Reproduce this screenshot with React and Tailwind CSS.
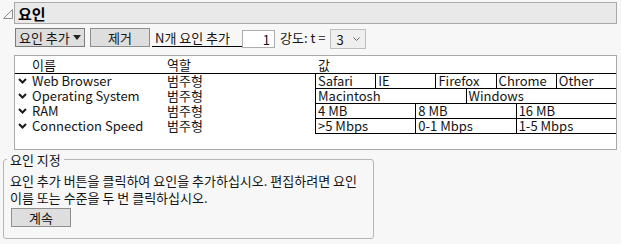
export default function App() {
  const rows = [
    { name: 'Web Browser', role: '범주형', values: ['Safari', 'IE', 'Firefox', 'Chrome', 'Other'] },
    { name: 'Operating System', role: '범주형', values: ['Macintosh', 'Windows'] },
    { name: 'RAM', role: '범주형', values: ['4 MB', '8 MB', '16 MB'] },
    { name: 'Connection Speed', role: '범주형', values: ['>5 Mbps', '0-1 Mbps', '1-5 Mbps'] },
  ];
  return (
    <div className="w-[621px] h-[244px] bg-[#f7f7f7] text-[13px] text-[#141414] font-['Noto_Sans_CJK_KR','Noto_Sans',sans-serif] overflow-hidden">
      {/* Title bar */}
      <div className="flex items-start pt-[2px] pl-[3px] pr-[4px]">
        <svg width="11" height="22" viewBox="0 0 11 22" className="shrink-0">
          <path d="M0.5 16.5 L9.5 16.5 L9.5 7.5 Z" fill="none" stroke="#8c8c8c" strokeWidth="1" />
        </svg>
        <div className="flex-1 h-[22px] bg-[#e9e9e9] border border-[#a9a9a9] pl-[3px] flex items-center text-[15px] font-bold leading-none text-black">
          요인
        </div>
      </div>

      {/* Controls row */}
      <div className="flex items-start ml-[15px] mt-[4px] leading-none">
        <div className="w-[70px] h-[19px] bg-[#dedede] border border-[#7c7c7c] flex items-center pl-[3px] gap-[3px]">
          <span>요인 추가</span>
          <svg width="8" height="5" viewBox="0 0 8 5"><path d="M0 0 L8 0 L4 5 Z" fill="#222" /></svg>
        </div>
        <div className="ml-[5px] w-[60px] h-[19px] bg-[#dedede] border border-[#8f8f8f] flex items-center justify-center">
          제거
        </div>
        <div className="ml-[2px] w-[90px] h-[19px] border-b border-black flex items-center pl-[3px]">
          N개 요인 추가
        </div>
        <div className="mt-[2px] w-[33px] h-[18px] bg-white border border-[#adadad] flex items-center justify-end pr-[4px]">
          1
        </div>
        <div className="ml-[5px] h-[19px] flex items-center">강도: t =</div>
        <div className="ml-[5px] mt-[1px] w-[36px] h-[20px] bg-[#efefef] border border-[#bdbdbd] flex items-center pl-[5px] pr-[5px] justify-between">
          <span>3</span>
          <svg width="7" height="5" viewBox="0 0 7 5"><path d="M0.5 0.5 L3.5 3.5 L6.5 0.5" fill="none" stroke="#666" strokeWidth="1" /></svg>
        </div>
      </div>

      {/* Factor table */}
      <div className="mt-[6px] ml-[14px] w-[603px] h-[95px] bg-white border border-[#a9a9a9]">
        <div className="h-[18px] border-b border-black flex items-center leading-none">
          <div className="w-[151px] pl-[17px]">이름</div>
          <div className="w-[149px] pl-[1px]">역할</div>
          <div className="pl-[3px]">값</div>
        </div>
        <div className="flex">
          <div className="w-[300px]">
            {rows.map((r) => (
              <div key={r.name} className="h-[15px] flex items-start leading-[13px]">
                <div className="w-[151px] flex items-start pl-[3px]">
                  <svg width="9" height="13" viewBox="0 0 9 13" className="shrink-0">
                    <path d="M1 5 L4.5 8.5 L8 5" fill="none" stroke="#1a1a1a" strokeWidth="2" />
                  </svg>
                  <span className="ml-[5px]">{r.name}</span>
                </div>
                <div className="w-[149px] pl-[1px]">{r.role}</div>
              </div>
            ))}
          </div>
          <div className="w-[301px] border-l border-black">
            {rows.map((r) => (
              <div key={r.name} className="h-[15px] flex border-b border-black leading-[13px]">
                {r.values.map((v, i) => (
                  <div
                    key={v}
                    className={i === 0 ? 'flex-1 pl-[2px]' : 'flex-1 pl-[2px] border-l border-black'}
                  >
                    {v}
                  </div>
                ))}
              </div>
            ))}
          </div>
        </div>
      </div>

      {/* Specify factors group */}
      <fieldset className="mt-[1px] ml-[3px] w-[371px] border border-[#b5b5b5] rounded-[3px] pb-[11px]">
        <legend className="ml-[3px] px-[3px] text-[13px] leading-[17px]">요인 지정</legend>
        <div className="pl-[6px] pt-[4px] leading-[17px] whitespace-nowrap">
          <div>요인 추가 버튼을 클릭하여 요인을 추가하십시오. 편집하려면 요인</div>
          <div>이름 또는 수준을 두 번 클릭하십시오.</div>
          <div className="mt-[2px] ml-[1px] w-[60px] h-[19px] bg-[#dedede] border border-[#8f8f8f] flex items-center justify-center leading-none">
            계속
          </div>
        </div>
      </fieldset>
    </div>
  );
}
